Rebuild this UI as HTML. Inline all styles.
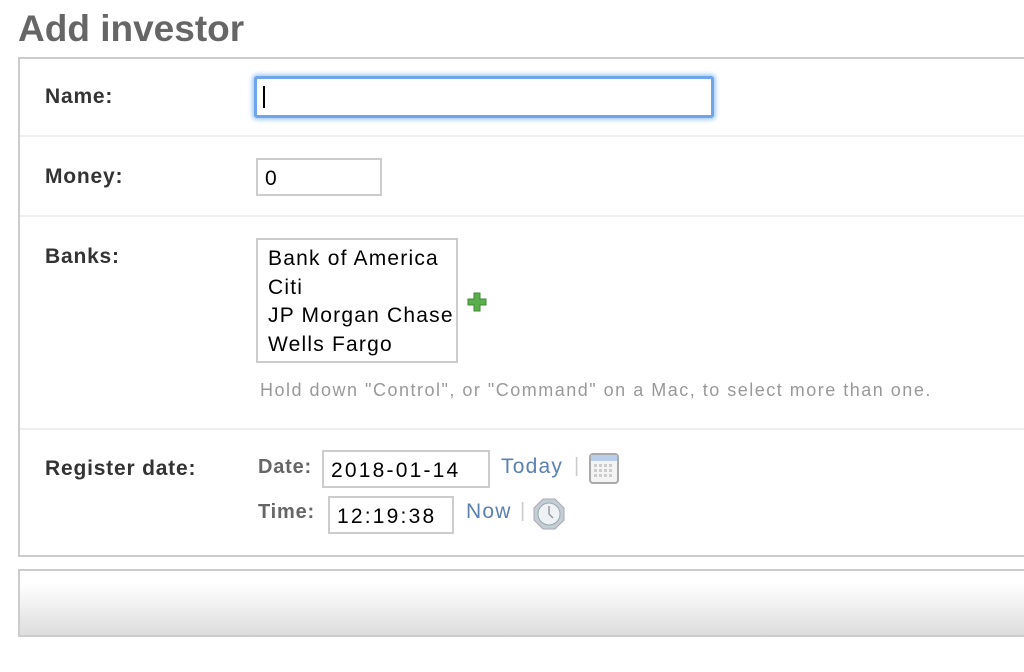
<!DOCTYPE html>
<html><head><meta charset="utf-8"><style>
*{margin:0;padding:0;box-sizing:border-box}
body{width:1024px;height:672px;background:#fff;position:relative;overflow:hidden;font-family:"Liberation Sans","DejaVu Sans",sans-serif}
.a{position:absolute;white-space:nowrap}
h1{position:absolute;left:18px;top:8px;font-size:37px;font-weight:bold;color:#666;letter-spacing:0px}
.box{position:absolute;left:18px;top:57px;width:1020px;height:500px;border:2px solid #ccc;border-right:none}
.sep{position:absolute;left:20px;width:1004px;height:2px;background:#eee}
.lab{font-size:21px;font-weight:bold;color:#333;letter-spacing:0.8px}
.inp{position:absolute;border:2px solid #ccc;background:#fff;font-size:21px;color:#000;padding-left:7px}
.sub{font-size:20px;font-weight:bold;color:#666;letter-spacing:0.8px}
.lnk{font-size:21px;color:#5b80b2;letter-spacing:1.2px}
.bar{font-size:20px;color:#ccc}
.foot{position:absolute;left:18px;top:569px;width:1010px;height:68px;border:2px solid #ccc;border-right:none;background:linear-gradient(#fff 20%,#ddd)}
</style></head><body>
<h1>Add investor</h1>
<div class="box"></div>
<div class="sep" style="top:135px"></div>
<div class="sep" style="top:215px"></div>
<div class="sep" style="top:428px"></div>

<div class="a lab" style="left:45px;top:85px">Name:</div>
<div class="inp" style="left:254px;top:76px;width:460px;height:42px;border:3px solid #6fa5ea;box-shadow:0 0 4px 2px #a8ccf7;border-radius:3px"><div style="position:absolute;left:6px;top:7px;width:2px;height:22px;background:#000"></div></div>

<div class="a lab" style="left:45px;top:165px">Money:</div>
<div class="inp" style="left:256px;top:158px;width:126px;height:38px;line-height:38px">0</div>

<div class="a lab" style="left:45px;top:245px">Banks:</div>
<div class="inp" style="left:256px;top:238px;width:202px;height:125px;padding:5px 0 0 10px;line-height:28.5px;font-size:21px;letter-spacing:1.2px">Bank of America<br>Citi<br>JP Morgan Chase<br>Wells Fargo</div>
<svg class="a" style="left:467px;top:292px" width="20" height="20" viewBox="0 0 20 20"><path d="M7 1h6v6h6v6h-6v6H7v-6H1V7h6z" fill="#5cae4c" stroke="#3d8a33" stroke-width="1"/></svg>
<div class="a" style="left:260px;top:380px;font-size:18px;color:#999;letter-spacing:1.5px">Hold down "Control", or "Command" on a Mac, to select more than one.</div>

<div class="a lab" style="left:45px;top:457px">Register date:</div>
<div class="a sub" style="left:258px;top:456px">Date:</div>
<div class="inp" style="left:322px;top:450px;width:168px;height:38px;line-height:38px;font-size:21px;letter-spacing:2.2px">2018-01-14</div>
<div class="a lnk" style="left:501px;top:455px">Today</div>
<div class="a bar" style="left:574px;top:455px">|</div>
<svg class="a" style="left:588px;top:452px" width="32" height="33" viewBox="0 0 32 33"><rect x="2" y="2" width="28" height="29" rx="3" fill="#f4f4f4" stroke="#aaa" stroke-width="2"/><rect x="3" y="3" width="26" height="6" fill="#b9cfe9"/><g fill="#ccc"><rect x="6" y="12" width="3" height="3"/><rect x="11" y="12" width="3" height="3"/><rect x="16" y="12" width="3" height="3"/><rect x="21" y="12" width="3" height="3"/><rect x="6" y="17" width="3" height="3"/><rect x="11" y="17" width="3" height="3"/><rect x="16" y="17" width="3" height="3"/><rect x="21" y="17" width="3" height="3"/><rect x="6" y="22" width="3" height="3"/><rect x="11" y="22" width="3" height="3"/><rect x="16" y="22" width="3" height="3"/><rect x="21" y="22" width="3" height="3"/></g></svg>

<div class="a sub" style="left:258px;top:501px">Time:</div>
<div class="inp" style="left:328px;top:496px;width:126px;height:38px;line-height:38px;font-size:21px;letter-spacing:2.2px">12:19:38</div>
<div class="a lnk" style="left:466px;top:500px">Now</div>
<div class="a bar" style="left:520px;top:500px">|</div>
<svg class="a" style="left:532px;top:497px" width="34" height="34" viewBox="0 0 34 34"><polygon points="11,2 23,2 32,11 32,23 23,32 11,32 2,23 2,11" fill="#c4ccd4" stroke="#aab" stroke-width="1"/><circle cx="17" cy="17" r="11" fill="#eef2f6" stroke="#9aa" stroke-width="1"/><path d="M17 9v8l4 4" stroke="#999" stroke-width="1.5" fill="none"/></svg>

<div class="foot"></div>
</body></html>
